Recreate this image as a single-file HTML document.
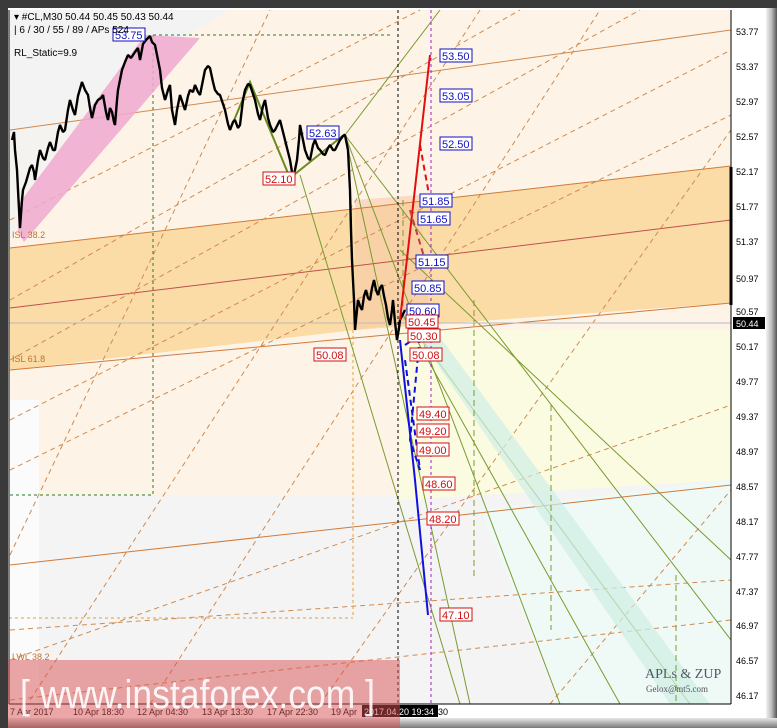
<!DOCTYPE html>
<html><head><meta charset="utf-8"><style>
html,body{margin:0;padding:0;width:777px;height:728px;overflow:hidden;background:#3c3c3c;font-family:"Liberation Sans",sans-serif}
</style></head><body>
<svg width="777" height="728" xmlns="http://www.w3.org/2000/svg" style="position:absolute;left:0;top:0">
<defs>
<linearGradient id="fr" x1="0" x2="1"><stop offset="0" stop-color="#f2f2f2"/><stop offset="0.5" stop-color="#bdbdbd"/><stop offset="1" stop-color="#555"/></linearGradient>
<linearGradient id="fb" x1="0" y1="0" x2="0" y2="1"><stop offset="0" stop-color="#e8e8e8"/><stop offset="1" stop-color="#777"/></linearGradient>
</defs>
<rect x="0" y="0" width="777" height="728" fill="#3a3a3a"/>
<rect x="8" y="8" width="762" height="712" fill="#fff"/>
<rect x="766" y="8" width="11" height="712" fill="url(#fr)"/>
<rect x="8" y="718" width="769" height="10" fill="url(#fb)"/>
<rect x="9" y="10" width="722" height="694" fill="#fdf4e7"/>
<polygon points="9,10 230,10 9,140" fill="#f3f3f3"/>
<polygon points="9,240 150,60 150,10 9,10" fill="#f2f2f2" opacity="0.8"/>
<rect x="9" y="495" width="400" height="209" fill="#f4f4f4"/>
<rect x="9" y="400" width="30" height="304" fill="#fbfbfb"/>
<polygon points="400,330 731,330 731,500 400,500" fill="#fbfbe2"/>
<polygon points="400,500 731,480 731,704 400,704" fill="#f4f4f4"/>
<polygon points="480,510 731,480 731,704 560,704" fill="#effaf6"/>
<polygon points="10,248 731,166 731,303 355,330 10,370" fill="#fbdca6"/>
<polygon points="355,200 420,195 430,320 355,330" fill="#f8c9a8" opacity="0.6"/>
<line x1="10" y1="248" x2="731" y2="166" stroke="#d07a3a" stroke-width="1"/>
<line x1="10" y1="308" x2="731" y2="220" stroke="#c0504a" stroke-width="1"/>
<line x1="10" y1="370" x2="731" y2="303" stroke="#d07a3a" stroke-width="1"/>
<line x1="10" y1="130" x2="731" y2="30" stroke="#d08a50" stroke-width="1"/>
<line x1="10" y1="565" x2="731" y2="485" stroke="#d07a3a" stroke-width="1"/>
<g stroke="#d08a50" stroke-width="1" stroke-dasharray="5,4" fill="none">
<line x1="10" y1="470" x2="731" y2="115"/>
<line x1="10" y1="420" x2="731" y2="50"/>
<line x1="10" y1="360" x2="640" y2="10"/>
<line x1="10" y1="300" x2="520" y2="10"/>
<line x1="10" y1="220" x2="420" y2="10"/>
<line x1="10" y1="660" x2="731" y2="405"/>
<line x1="10" y1="630" x2="731" y2="580"/>
<line x1="10" y1="700" x2="731" y2="620"/>
<line x1="30" y1="700" x2="480" y2="10"/>
<line x1="150" y1="704" x2="600" y2="10"/>
<line x1="320" y1="704" x2="731" y2="130"/>
<line x1="550" y1="704" x2="731" y2="490"/>
<line x1="10" y1="555" x2="270" y2="10"/>
</g>
<path d="M153,35 H390 M153,35 V495 H9" stroke="#2a7a2a" stroke-dasharray="3,3" fill="none"/>
<line x1="353" y1="330" x2="353" y2="618" stroke="#e0a040" stroke-dasharray="3,3"/>
<line x1="9" y1="618" x2="353" y2="618" stroke="#e0a040" stroke-dasharray="3,3"/>
<g stroke="#7a9a30" stroke-width="1" fill="none">
<line x1="345" y1="135" x2="560" y2="704"/>
<line x1="345" y1="135" x2="470" y2="704"/>
<line x1="300" y1="175" x2="460" y2="704"/>
<line x1="345" y1="135" x2="731" y2="640"/>
<line x1="400" y1="250" x2="731" y2="560"/>
<line x1="400" y1="310" x2="620" y2="704"/>
<line x1="400" y1="310" x2="690" y2="704"/>
<line x1="345" y1="135" x2="440" y2="10"/>
</g>
<polygon points="400,310 420,310 710,704 670,704" fill="#cfeee6" opacity="0.7"/>
<g stroke="#7a9a30" stroke-dasharray="6,4" fill="none">
<line x1="474" y1="300" x2="474" y2="580"/>
<line x1="551" y1="405" x2="551" y2="630"/>
<line x1="676" y1="575" x2="676" y2="704"/>
<line x1="403" y1="200" x2="403" y2="310"/>
</g>
<polygon points="18,232 18,205 145,35 200,38 24,242" fill="#f0a8cf" opacity="0.85"/>
<polyline points="230,130 250,82 290,178 345,134" stroke="#6a8a20" stroke-width="2" fill="none"/>
<line x1="9" y1="323" x2="731" y2="323" stroke="#bbb"/>
<line x1="398" y1="10" x2="398" y2="704" stroke="#000" stroke-dasharray="3,3"/>
<line x1="431" y1="10" x2="431" y2="704" stroke="#a020c0" stroke-dasharray="3,3"/>
<polyline fill="none" stroke="#000" stroke-width="2.4" stroke-linejoin="bevel" points="12,140 14,132 15,150 17,170 18,190 20,228 22,200 23,190 26,182 28,175 30,168 32,165 34,172 35,180 38,160 40,150 43,158 45,160 48,148 50,142 53,150 55,150 58,132 60,125 63,132 65,130 68,110 70,100 73,110 75,115 78,96 82,82 85,90 88,95 90,108 92,118 95,105 98,100 101,98 103,95 106,112 108,120 110,108 112,112 114,122 115,125 117,100 118,90 120,80 122,70 125,62 128,55 131,58 135,52 138,48 140,60 143,44 146,40 150,36 152,42 155,45 158,60 160,70 162,88 165,100 168,90 170,85 172,110 175,125 177,110 180,95 183,104 185,110 188,96 190,90 193,92 195,85 198,92 200,95 203,80 205,70 208,66 210,68 213,82 215,90 218,94 220,95 223,104 225,110 228,124 230,130 233,122 235,120 238,128 240,125 243,100 245,90 248,84 250,85 253,94 255,100 258,114 260,120 263,106 265,100 268,118 270,125 273,132 275,130 278,124 280,120 283,132 285,140 288,152 290,160 293,178 295,170 297,160 299,140 300,125 303,140 305,150 308,158 310,160 313,145 315,140 318,148 320,150 323,154 325,155 328,148 330,145 333,150 335,150 338,144 340,140 343,136 345,135 348,150 350,190 351,230 352,260 354,300 355,330 357,310 358,300 360,306 362,310 364,296 366,290 368,298 370,300 372,288 374,280 376,290 378,295 380,288 382,285 384,296 386,305 388,318 390,325 392,310 393,300 395,322 397,340 399,328 400,320 403,314 405,310"/>
<polyline points="400,320 412,215 430,55" stroke="#e01010" stroke-width="2" fill="none"/>
<polyline points="420,145 430,200" stroke="#e01010" stroke-width="2" stroke-dasharray="6,4" fill="none"/>
<polyline points="410,210 425,260" stroke="#c04040" stroke-width="2" stroke-dasharray="6,4" fill="none"/>
<polyline points="400,340 415,480 428,615" stroke="#1010e0" stroke-width="2" fill="none"/>
<polyline points="405,345 420,335 410,440 420,470 405,360" stroke="#1010e0" stroke-width="2" stroke-dasharray="6,4" fill="none"/>
<g font-size="11" font-family="Liberation Sans,sans-serif">
<g fill="#fff" stroke="#1010c0"><rect x="113" y="28" width="32" height="13"/><rect x="307" y="126" width="32" height="13"/>
<rect x="440" y="49" width="32" height="13"/><rect x="440" y="89" width="32" height="13"/><rect x="440" y="137" width="32" height="13"/><rect x="420" y="194" width="32" height="13"/><rect x="418" y="212" width="32" height="13"/><rect x="416" y="255" width="32" height="13"/><rect x="412" y="281" width="32" height="13"/><rect x="407" y="304" width="32" height="13"/></g>
<g fill="#1010c0"><text x="115" y="39">53.75</text><text x="309" y="137">52.63</text><text x="442" y="60">53.50</text><text x="442" y="100">53.05</text><text x="442" y="148">52.50</text><text x="422" y="205">51.85</text><text x="420" y="223">51.65</text><text x="418" y="266">51.15</text><text x="414" y="292">50.85</text><text x="409" y="315">50.60</text></g>
<g fill="#fff" stroke="#d01010"><rect x="263" y="172" width="32" height="13"/><rect x="314" y="348" width="32" height="13"/>
<rect x="406" y="315" width="32" height="13"/><rect x="408" y="329" width="32" height="13"/><rect x="410" y="348" width="32" height="13"/><rect x="417" y="407" width="32" height="13"/><rect x="417" y="424" width="32" height="13"/><rect x="417" y="443" width="32" height="13"/><rect x="423" y="477" width="32" height="13"/><rect x="427" y="512" width="32" height="13"/><rect x="440" y="608" width="32" height="13"/></g>
<g fill="#d01010"><text x="265" y="183">52.10</text><text x="316" y="359">50.08</text><text x="408" y="326">50.45</text><text x="410" y="340">50.30</text><text x="412" y="359">50.08</text><text x="419" y="418">49.40</text><text x="419" y="435">49.20</text><text x="419" y="454">49.00</text><text x="425" y="488">48.60</text><text x="429" y="523">48.20</text><text x="442" y="619">47.10</text></g>
</g>
<g font-size="9" fill="#c07030"><text x="12" y="238">ISL 38.2</text><text x="12" y="362">ISL 61.8</text><text x="12" y="660">LWL 38.2</text></g>
<text x="14" y="20" font-size="10" fill="#000">▾ #CL,M30  50.44 50.45 50.43 50.44</text>
<text x="14" y="33" font-size="10" fill="#000">| 6 / 30 / 55 / 89 / APs 524</text>
<text x="14" y="56" font-size="10" fill="#000">RL_Static=9.9</text>
<text x="645" y="678" font-size="14" fill="#556" font-family="Liberation Serif,serif">APLs &amp; ZUP</text>
<text x="646" y="692" font-size="9" fill="#556" font-family="Liberation Serif,serif">Gelox@mt5.com</text>
<line x1="731" y1="10" x2="731" y2="704" stroke="#000"/>
<line x1="731" y1="167" x2="731" y2="305" stroke="#000" stroke-width="3"/>
<line x1="9" y1="704" x2="731" y2="704" stroke="#000"/>
<line x1="9" y1="10" x2="9" y2="704" stroke="#000"/>
<g font-size="9" fill="#000">
<text x="736" y="35">53.77</text><text x="736" y="70">53.37</text><text x="736" y="105">52.97</text><text x="736" y="140">52.57</text><text x="736" y="175">52.17</text><text x="736" y="210">51.77</text><text x="736" y="245">51.37</text><text x="736" y="282">50.97</text><text x="736" y="315">50.57</text><text x="736" y="350">50.17</text><text x="736" y="385">49.77</text><text x="736" y="420">49.37</text><text x="736" y="455">48.97</text><text x="736" y="490">48.57</text><text x="736" y="525">48.17</text><text x="736" y="560">47.77</text><text x="736" y="595">47.37</text><text x="736" y="629">46.97</text><text x="736" y="664">46.57</text><text x="736" y="699">46.17</text>
</g>
<rect x="733" y="317" width="32" height="12" fill="#000"/>
<text x="736" y="327" font-size="9" fill="#fff">50.44</text>
<g font-size="9" fill="#000"><text x="10" y="715">7 Apr 2017</text><text x="73" y="715">10 Apr 18:30</text><text x="137" y="715">12 Apr 04:30</text><text x="202" y="715">13 Apr 13:30</text><text x="267" y="715">17 Apr 22:30</text><text x="331" y="715">19 Apr</text></g>
<rect x="362" y="705" width="76" height="12" fill="#000"/>
<text x="364" y="715" font-size="9" fill="#fff">2017.04.20 19:34</text><text x="438" y="715" font-size="9" fill="#000">30</text>
<rect x="8" y="660" width="392" height="68" fill="#d85050" opacity="0.5"/>
<text x="20" y="708" font-size="40" fill="#fff" opacity="0.9" textLength="355" lengthAdjust="spacingAndGlyphs">[ www.instaforex.com ]</text>
</svg>
</body></html>
